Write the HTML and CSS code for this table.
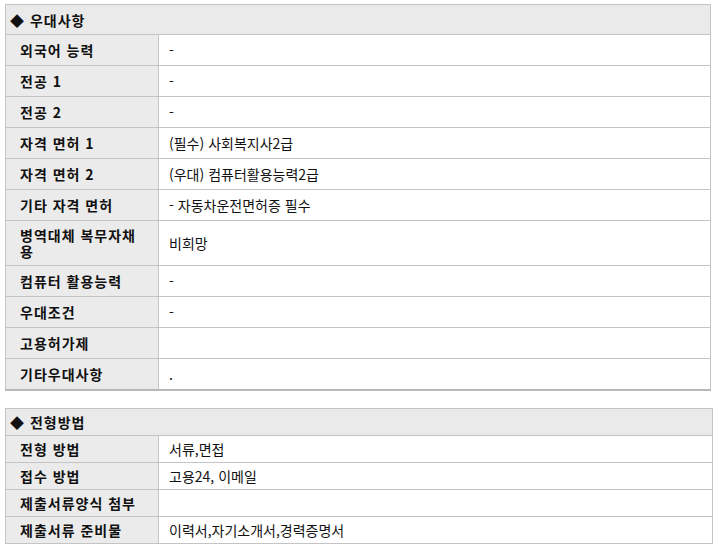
FILE: index.html
```html
<!DOCTYPE html>
<html lang="ko">
<head>
<meta charset="utf-8">
<link rel="stylesheet" href="styles.css">
</head>
<body>
<div class="page">
<table class="tbl tbl-a">
  <colgroup><col class="c-label"><col></colgroup>
  <thead>
    <tr><th colspan="2" class="head">◆ 우대사항</th></tr>
  </thead>
  <tbody>
    <tr><th>외국어 능력</th><td>-</td></tr>
    <tr><th>전공 1</th><td>-</td></tr>
    <tr><th>전공 2</th><td>-</td></tr>
    <tr><th>자격 면허 1</th><td>(필수) 사회복지사2급</td></tr>
    <tr><th>자격 면허 2</th><td>(우대) 컴퓨터활용능력2급</td></tr>
    <tr><th>기타 자격 면허</th><td>- 자동차운전면허증 필수</td></tr>
    <tr class="tall"><th>병역대체 복무자채용</th><td>비희망</td></tr>
    <tr><th>컴퓨터 활용능력</th><td>-</td></tr>
    <tr><th>우대조건</th><td>-</td></tr>
    <tr><th>고용허가제</th><td></td></tr>
    <tr><th>기타우대사항</th><td>.</td></tr>
  </tbody>
</table>

<table class="tbl tbl-b">
  <colgroup><col class="c-label"><col></colgroup>
  <thead>
    <tr><th colspan="2" class="head">◆ 전형방법</th></tr>
  </thead>
  <tbody>
    <tr><th>전형 방법</th><td>서류,면접</td></tr>
    <tr><th>접수 방법</th><td>고용24, 이메일</td></tr>
    <tr><th>제출서류양식 첨부</th><td></td></tr>
    <tr><th>제출서류 준비물</th><td>이력서,자기소개서,경력증명서</td></tr>
  </tbody>
</table>
</div>
</body>
</html>
```

FILE: styles.css
```css
html, body {
  margin: 0;
  padding: 0;
  background: #ffffff;
}
body {
  font-family: "Noto Sans CJK KR", "Noto Sans", sans-serif;
  font-size: 14px;
  color: #111111;
}
.page {
  padding: 4px 0 0 5px;
}
.tbl {
  border-collapse: collapse;
  table-layout: fixed;
}
.c-label {
  width: 153px;
}
.tbl-a {
  width: 706px;
  border-bottom: 2px solid #b8b8b8;
}
.tbl-b {
  width: 708px;
  margin-top: 17px;
}
.tbl th, .tbl td {
  border: 1px solid #c4c4c4;
  text-align: left;
  vertical-align: middle;
  line-height: 16px;
  font-size: 14px;
}
.tbl thead th.head {
  background: #eaeaea;
  padding: 0 0 0 4px;
  font-weight: bold;
  letter-spacing: 1px;
}
.tbl tbody th {
  background: #ebebeb;
  font-weight: bold;
  padding: 0 14px 0 14px;
  letter-spacing: 1px;
}
.tbl td {
  padding: 0 10px;
}
.tbl-a thead th.head {
  height: 29px;
}
.tbl-a tbody th {
  height: 30px;
}
.tbl-a tbody tr.tall th {
  height: 44px;
}
.tbl-b thead th.head {
  height: 26px;
}
.tbl-b tbody th {
  height: 26px;
}
```
